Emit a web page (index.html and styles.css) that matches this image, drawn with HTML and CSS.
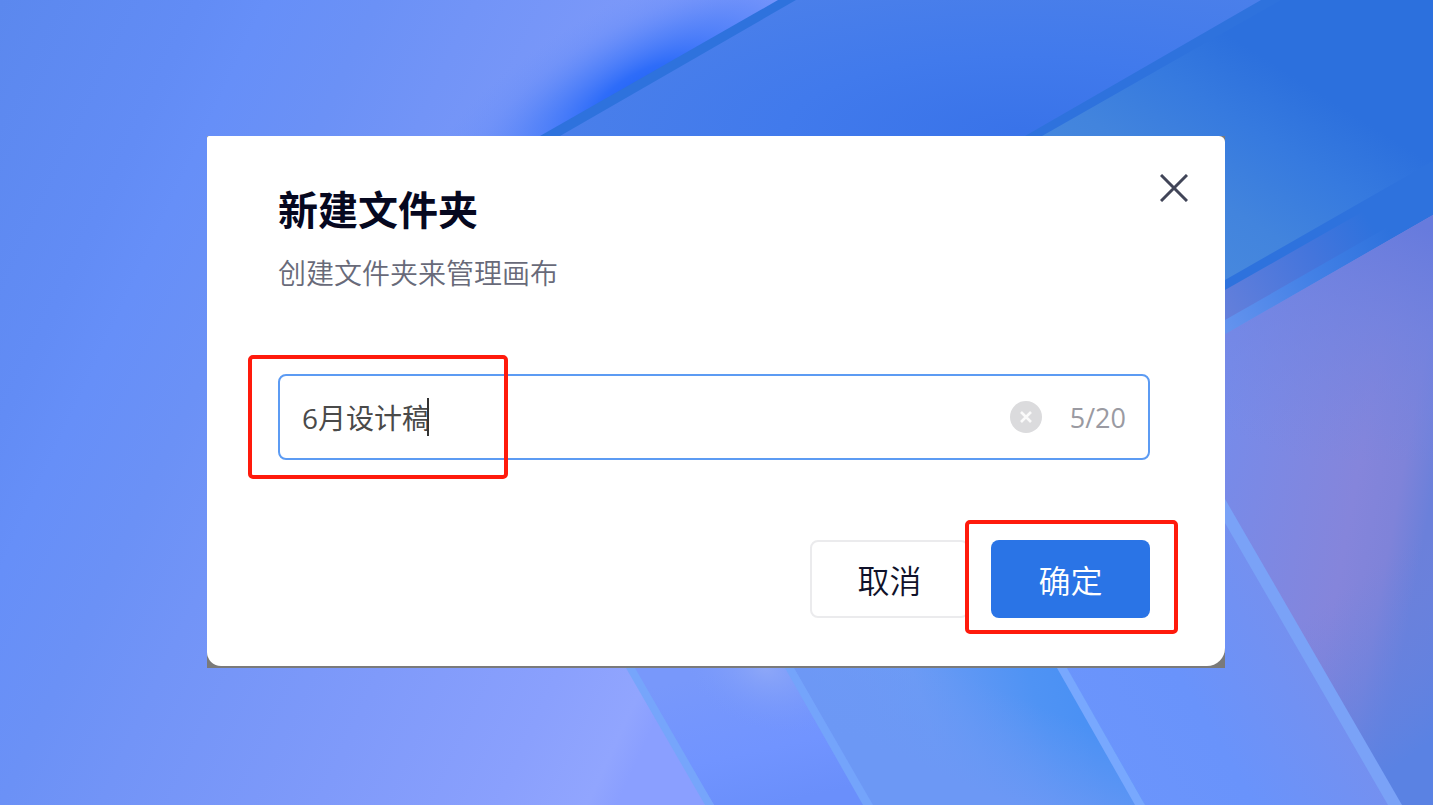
FILE: index.html
```html
<!DOCTYPE html>
<html lang="zh-CN">
<head>
<meta charset="utf-8">
<meta name="viewport" content="width=device-width, initial-scale=1">
<title>新建文件夹</title>
<link rel="stylesheet" href="styles.css">
</head>
<body>
<svg class="wallpaper" viewBox="0 0 1433 805" preserveAspectRatio="none" aria-hidden="true">
  <defs>
    <linearGradient id="base" gradientUnits="userSpaceOnUse" x1="0" y1="0" x2="815" y2="381">
      <stop offset="0" stop-color="#5b88ee"/><stop offset=".2" stop-color="#628cf5"/><stop offset=".27" stop-color="#668ff8"/><stop offset=".38" stop-color="#6b91f6"/><stop offset=".48" stop-color="#7294f7"/><stop offset=".7" stop-color="#7f9afa"/><stop offset=".88" stop-color="#8aa0fd"/><stop offset=".97" stop-color="#91a5fe"/><stop offset="1" stop-color="#8a9fff"/>
    </linearGradient>
    <radialGradient id="glow" gradientUnits="userSpaceOnUse" cx="0" cy="0" r="1" gradientTransform="translate(640 92) rotate(-29) scale(250 92)">
      <stop offset="0" stop-color="#2163f9"/><stop offset=".2" stop-color="#2a6af9" stop-opacity=".95"/><stop offset=".5" stop-color="#447af9" stop-opacity=".6"/><stop offset=".75" stop-color="#5a86f9" stop-opacity=".25"/><stop offset="1" stop-color="#6890fa" stop-opacity="0"/>
    </radialGradient>
    <radialGradient id="upper" gradientUnits="userSpaceOnUse" cx="0" cy="0" r="1" gradientTransform="translate(1020 130) scale(470 150)">
      <stop offset="0" stop-color="#3973e9"/><stop offset=".5" stop-color="#417aec"/><stop offset="1" stop-color="#4a7fea"/>
    </radialGradient>
    <linearGradient id="teal" gradientUnits="userSpaceOnUse" x1="1140" y1="245" x2="1260" y2="55">
      <stop offset="0" stop-color="#4889de"/><stop offset=".35" stop-color="#4284dd"/><stop offset=".7" stop-color="#367adf"/><stop offset="1" stop-color="#2c70dd"/>
    </linearGradient>
    <linearGradient id="violet" gradientUnits="userSpaceOnUse" x1="1215" y1="450" x2="1433" y2="490">
      <stop offset="0" stop-color="#768bea"/><stop offset=".65" stop-color="#8585db"/><stop offset=".85" stop-color="#7f83d9"/><stop offset="1" stop-color="#6b80da"/>
    </linearGradient>
    <linearGradient id="violetTop" gradientUnits="userSpaceOnUse" x1="1390" y1="215" x2="1300" y2="460">
      <stop offset="0" stop-color="#677bdd"/><stop offset=".4" stop-color="#6f82e0" stop-opacity=".7"/><stop offset="1" stop-color="#7586e0" stop-opacity="0"/>
    </linearGradient>
    <linearGradient id="violetEnd" gradientUnits="userSpaceOnUse" x1="1330" y1="600" x2="1433" y2="740">
      <stop offset="0" stop-color="#6c83df" stop-opacity="0"/><stop offset="1" stop-color="#5a82e3"/>
    </linearGradient>
    <linearGradient id="band" gradientUnits="userSpaceOnUse" x1="1225" y1="310" x2="1370" y2="222">
      <stop offset="0" stop-color="#637fdb"/><stop offset=".6" stop-color="#4475dc"/><stop offset="1" stop-color="#2e72dd"/>
    </linearGradient>
    <linearGradient id="edge" gradientUnits="userSpaceOnUse" x1="1225" y1="328" x2="1390" y2="232">
      <stop offset="0" stop-color="#6493ee"/><stop offset=".5" stop-color="#4481e6"/><stop offset="1" stop-color="#2e72dd"/>
    </linearGradient>
    <linearGradient id="panelA" gradientUnits="userSpaceOnUse" x1="740" y1="668" x2="770" y2="805">
      <stop offset="0" stop-color="#7898fb"/><stop offset=".6" stop-color="#7194ff"/><stop offset="1" stop-color="#6a8ffb"/>
    </linearGradient>
    <radialGradient id="mist" gradientUnits="userSpaceOnUse" cx="0" cy="0" r="1" gradientTransform="translate(765 668) rotate(20) scale(90 60)">
      <stop offset="0" stop-color="#8da7f8"/><stop offset="1" stop-color="#7798fb" stop-opacity="0"/>
    </radialGradient>
    <linearGradient id="panelB" gradientUnits="userSpaceOnUse" x1="830" y1="740" x2="1065" y2="665">
      <stop offset="0" stop-color="#7098f7"/><stop offset=".4" stop-color="#6c9bf5"/><stop offset=".85" stop-color="#4f93f4"/><stop offset="1" stop-color="#4b91f4"/>
    </linearGradient>
    <linearGradient id="panelBEnd" gradientUnits="userSpaceOnUse" x1="1050" y1="710" x2="1010" y2="805">
      <stop offset="0" stop-color="#6a98f4" stop-opacity="0"/><stop offset="1" stop-color="#6c98f5"/>
    </linearGradient>
    <linearGradient id="panelC" gradientUnits="userSpaceOnUse" x1="1080" y1="760" x2="1300" y2="630">
      <stop offset="0" stop-color="#6b95fc"/><stop offset=".5" stop-color="#6993fb"/><stop offset="1" stop-color="#7590ef"/>
    </linearGradient>
  </defs>
  <rect width="1433" height="805" fill="url(#base)"/>
  <rect x="360" width="540" height="330" fill="url(#glow)"/>
  <path d="M540 136L778 0H1433V400H540z" fill="#2e72dd"/>
  <path d="M796 0H1261L1025 136H560z" fill="url(#upper)"/>
  <path d="M1042 136L1281 0H1433V161L1225 280H1042z" fill="url(#teal)"/>
  <path d="M1225 290L1385 199 1415 215 1225 322z" fill="url(#band)"/>
  <path d="M1225 320L1400 220 1433 215V240L1225 345z" fill="url(#edge)"/>
  <path d="M1215 340L1433 215V805H1215z" fill="url(#violet)"/>
  <path d="M1215 340L1433 215V460H1215z" fill="url(#violetTop)"/>
  <path d="M1215 540H1433V805H1215z" fill="url(#violetEnd)"/>
  <path d="M600 620H800L900 805H714z" fill="url(#panelA)"/>
  <path d="M610 620H780L850 780H700z" fill="url(#mist)"/>
  <path d="M766 620H1060L1145 805H873z" fill="url(#panelB)"/>
  <path d="M794 668H1066L1145 805H873z" fill="url(#panelBEnd)"/>
  <path d="M1039 620H1225V520L1390 805H1145z" fill="url(#panelC)"/>
  <path d="M626 668H635L714 805H705z" fill="#76a5fb"/>
  <path d="M785 668H794L873 805H863z" fill="#74a4fb"/>
  <path d="M1057 668H1067L1145 805H1135z" fill="#78a8fe"/>
  <path d="M1225 499V523L1388 805H1402z" fill="#7aa2f7"/>
</svg>
<main class="stage">
  <div class="frame">
    <form class="dialog" role="dialog" aria-labelledby="title" aria-describedby="hint">
      <header class="header">
        <div class="heading">
          <h1 class="title" id="title">新建文件夹</h1>
          <p class="hint" id="hint">创建文件夹来管理画布</p>
        </div>
        <button class="close" type="button" aria-label="关闭">
          <svg viewBox="0 0 28 28" width="28" height="28"><path d="M1 1L27 27M27 1L1 27" fill="none" stroke="#414558" stroke-width="3"/></svg>
        </button>
      </header>
      <div class="field marked">
        <input class="name" type="text" maxlength="20" value="6月设计稿" aria-label="文件夹名称">
        <span class="caret"></span>
        <button class="clear" type="button" aria-label="清除">
          <svg viewBox="0 0 32 32" width="32" height="32"><circle cx="16" cy="16" r="16" fill="#dbdbdd"/><path d="M11 11L21 21M21 11L11 21" fill="none" stroke="#fafafa" stroke-width="2.6"/></svg>
        </button>
        <span class="count">5/20</span>
      </div>
      <footer class="actions">
        <button class="button" type="button">取消</button>
        <div class="submit marked"><button class="button primary" type="submit">确定</button></div>
      </footer>
    </form>
  </div>
</main>
</body>
</html>
```
FILE: styles.css
```css
*,
*::after {
  box-sizing: border-box;
}

body {
  margin: 0;
  font-family: "Noto Sans CJK SC", sans-serif;
}

button,
input {
  font: inherit;
  border: 0;
  padding: 0;
  background: none;
}

button {
  cursor: pointer;
}

svg {
  display: block;
}

.wallpaper {
  position: fixed;
  inset: 0;
  width: 100%;
  height: 100%;
  z-index: -1;
}

.stage {
  min-height: 100vh;
  padding: 0 33px 1px 32px;
  display: grid;
  justify-items: center;
  align-items: center;
}

.frame {
  width: 100%;
  max-width: 1018px;
  background: #7a7a7a;
  padding-bottom: 2px;
}

.dialog {
  background: #fff;
  border-radius: 2px 6px 18px 14px;
  padding: 38px 75px 48px 71px;
}

.header {
  display: flex;
  justify-content: space-between;
  align-items: flex-start;
  margin-right: -38px;
}

.heading {
  padding-top: 10px;
}

.title {
  margin: 0 0 22px;
  font-size: 40px;
  line-height: 48px;
  font-weight: 700;
  color: #06081f;
}

.hint {
  margin: 0;
  font-size: 28px;
  line-height: 36px;
  font-weight: 350;
  color: #686a79;
}

.field {
  position: relative;
  display: flex;
  align-items: center;
  height: 86px;
  margin-top: 84px;
  padding: 0 22px;
  border: 2px solid #5c9bf3;
  border-radius: 8px;
  font-size: 28px;
  font-family: "Open Sans", "Noto Sans CJK SC", sans-serif;
}

.name {
  flex: 1;
  min-width: 0;
  height: 48px;
  color: #4a4a4a;
  outline: none;
}

.caret {
  position: absolute;
  left: 147px;
  top: 22px;
  width: 2px;
  height: 38px;
  background: #333;
}

.clear {
  margin-right: 28px;
}

.count {
  color: #9a9aa2;
  font-size: 27px;
}

.actions {
  display: flex;
  justify-content: flex-end;
  gap: 22px;
  margin-top: 80px;
}

.button {
  width: 159px;
  height: 78px;
  border: 2px solid #ebebed;
  border-radius: 8px;
  font-size: 32px;
  font-weight: 350;
  line-height: 40px;
  color: #10122a;
}

.primary {
  display: block;
  border: 0;
  background: #2a74e6;
  color: #fff;
}

.submit {
  position: relative;
}

.marked::after {
  content: "";
  position: absolute;
  border: 4px solid #ff1a0c;
  border-radius: 5px;
  pointer-events: none;
}

.field::after {
  left: -32px;
  top: -21px;
  width: 260px;
  height: 124px;
}

.submit::after {
  inset: -20px -28px -16px -26px;
}
```
